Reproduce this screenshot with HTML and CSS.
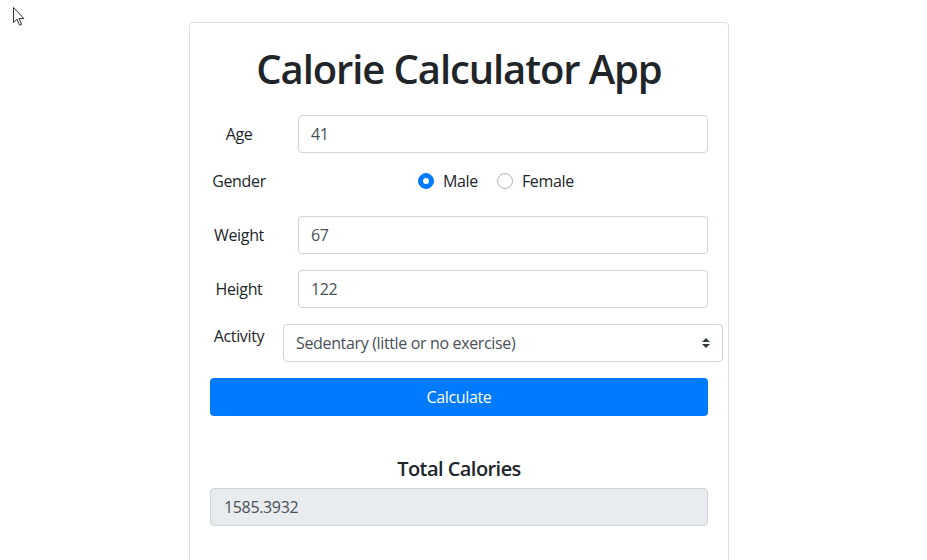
FILE: index.html
```html
<!DOCTYPE html>
<html lang="en">
<head>
<meta charset="utf-8">
<title>Calorie Calculator App</title>
<link rel="stylesheet" href="styles.css">
</head>
<body>
<svg class="cursor" width="12" height="20" viewBox="0 0 12 20"><path d="M0.5 0.5 L0.5 15.5 L4 12.2 L6.6 18.3 L8.6 17.4 L6.1 11.5 L10.8 11.5 Z" fill="#fff" stroke="#333" stroke-width="1" stroke-linejoin="round"/></svg>
<main class="page">
  <section class="card">
    <h1 class="title">Calorie Calculator App</h1>
    <form class="form">
      <div class="field">
        <label class="label">Age</label>
        <div class="control">41</div>
      </div>
      <div class="field gender">
        <span class="label">Gender</span>
        <div class="radios">
          <span class="radio checked"></span><span class="radio-text">Male</span>
          <span class="radio"></span><span class="radio-text">Female</span>
        </div>
      </div>
      <div class="field">
        <label class="label">Weight</label>
        <div class="control">67</div>
      </div>
      <div class="field">
        <label class="label">Height</label>
        <div class="control">122</div>
      </div>
      <div class="field activity">
        <label class="label">Activity</label>
        <div class="control select">Sedentary (little or no exercise)
          <svg class="arrows" width="8" height="10" viewBox="0 0 4 5"><path d="M2 0L0 2h4zm0 5L0 3h4z" fill="#343a40"/></svg>
        </div>
      </div>
      <div class="button">Calculate</div>
      <h5 class="total-title">Total Calories</h5>
      <div class="output">1585.3932</div>
    </form>
  </section>
</main>
</body>
</html>
```

FILE: styles.css
```css
html, body {
  margin: 0;
  padding: 0;
  background: #fff;
}
body {
  font-family: "Open Sans", "Noto Sans", sans-serif;
  font-size: 16px;
  line-height: 24px;
  letter-spacing: -0.35px;
  color: #212529;
  position: relative;
  height: 560px;
  overflow: hidden;
}
.cursor {
  position: absolute;
  left: 13px;
  top: 7px;
}
.page {
  padding-top: 22px;
  padding-left: 189px;
}
.card {
  box-sizing: border-box;
  width: 540px;
  min-height: 560px;
  border: 1px solid #dfdfdf;
  border-radius: 4px;
  padding: 20px;
}
.title {
  margin: 0 0 20px;
  font-size: 40px;
  line-height: 52px;
  font-weight: 600;
  text-align: center;
  letter-spacing: -1.1px;
}
.form {
  display: flex;
  flex-direction: column;
}
.field {
  display: flex;
  align-items: center;
  margin-bottom: 16px;
}
.label {
  width: 58px;
  text-align: center;
  flex: none;
  margin-right: 30px;
}
.control {
  box-sizing: border-box;
  flex: 1;
  height: 38px;
  border: 1px solid #ced4da;
  border-radius: 4px;
  padding: 0 12px;
  color: #495057;
  display: flex;
  align-items: center;
}
.gender {
  margin-bottom: 23px;
  height: 24px;
}
.radios {
  display: flex;
  align-items: center;
  margin-left: 120px;
}
.radio {
  box-sizing: border-box;
  width: 16px;
  height: 16px;
  border-radius: 50%;
  border: 1px solid #adb5bd;
  background: #fff;
  margin-right: 9px;
  position: relative;
}
.radio.checked {
  border-color: #007bff;
  background: #007bff;
}
.radio.checked::after {
  content: "";
  position: absolute;
  left: 4px;
  top: 4px;
  width: 6px;
  height: 6px;
  border-radius: 50%;
  background: #fff;
}
.radio-text {
  margin-right: 19px;
}
.activity {
  align-items: flex-start;
}
.activity .label {
  margin-right: 15px;
  padding-top: 0;
}
.select {
  flex: none;
  width: 440px;
  justify-content: space-between;
}
.button {
  height: 38px;
  border-radius: 4px;
  background: #007bff;
  color: #fff;
  display: flex;
  align-items: center;
  justify-content: center;
}
.total-title {
  margin: 41px 0 7px;
  font-size: 20px;
  line-height: 24px;
  font-weight: 600;
  text-align: center;
  letter-spacing: -0.55px;
}
.output {
  box-sizing: border-box;
  height: 38px;
  border: 1px solid #ced4da;
  border-radius: 4px;
  background: #e9ecef;
  color: #495057;
  padding: 0 13px;
  display: flex;
  align-items: center;
}
```
